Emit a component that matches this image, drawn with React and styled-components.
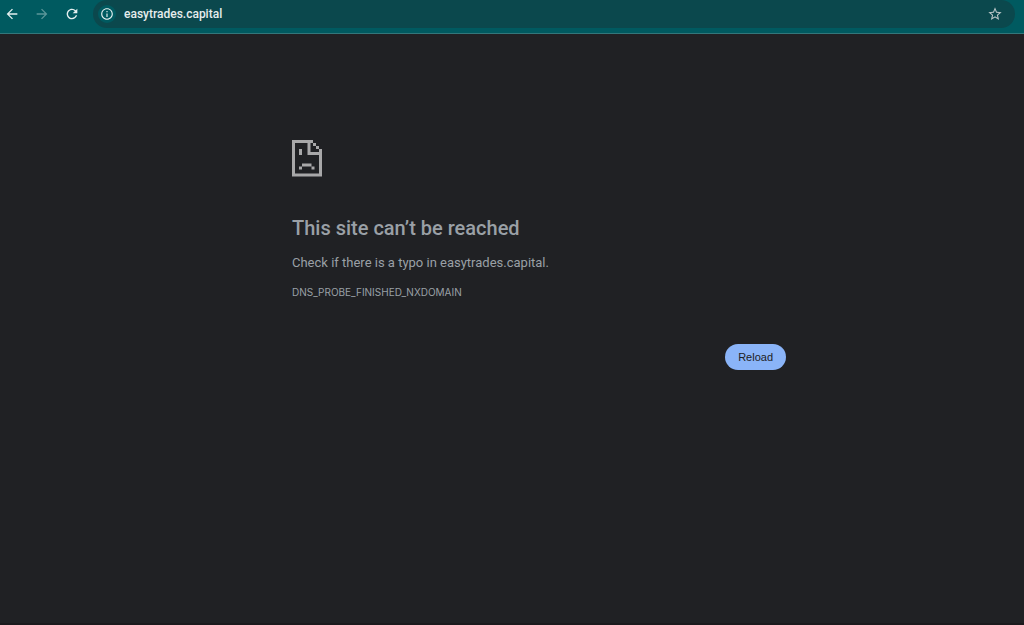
import styled, { createGlobalStyle } from "styled-components";
import { MdArrowBack, MdArrowForward, MdInfoOutline, MdRefresh, MdStarBorder } from "react-icons/md";

const GlobalStyle = createGlobalStyle`
    * {
        box-sizing: border-box;
    }

    body {
        margin: 0;
        background-color: #202124;
        font-family: Roboto, "Liberation Sans", sans-serif;
    }
`;

const Page = styled.div`
    display: flex;
    flex-direction: column;
    min-height: 100vh;
    border-bottom: 2px solid #1b1a1d;
`;

const Toolbar = styled.header`
    display: flex;
    align-items: flex-start;
    height: 34px;
    padding: 0 9px 0 3px;
    background-color: #005a60;
    border-bottom: 1px solid #33777b;
`;

const Navigation = styled.nav`
    display: flex;
    align-items: center;
    gap: 12px;
    height: 28px;
    margin-right: 12px;
`;

const IconButton = styled.button`
    display: flex;
    align-items: center;
    justify-content: center;
    flex: none;
    width: 18px;
    height: 18px;
    padding: 0;
    border: 0;
    border-radius: 50%;
    background-color: ${({ $fill }) => $fill || "transparent"};
    color: ${({ $color }) => $color || "#e4efef"};
    font-size: ${({ $size }) => $size || 16}px;
`;

const AddressBar = styled.div`
    display: flex;
    align-items: center;
    flex: 1;
    height: 28px;
    padding: 0 11px 0 5px;
    border-radius: 14px;
    background-color: #0b484d;
`;

const AddressInput = styled.input`
    flex: 1;
    min-width: 0;
    height: 20px;
    padding: 0;
    margin-left: 8px;
    border: 0;
    outline: 0;
    background: transparent;
    color: #e6eded;
    font-family: inherit;
    font-size: 12px;
    font-weight: 500;
`;

const Content = styled.main`
    width: 100%;
    padding: 106px 0 0 54px;
    color: #9aa0a6;
`;

const ErrorBox = styled.div`
    width: 100%;
    max-width: 494px;
    margin: 0 auto;
`;

const SadPageIcon = styled.svg`
    display: block;
    width: 30px;
    height: 37px;
    fill: #a8a8a9;
`;

const Title = styled.h1`
    margin: 38px 0 0;
    font-size: 20px;
    font-weight: 500;
    line-height: 26px;
`;

const Message = styled.p`
    margin: 12px 0 0;
    font-size: 13px;
    line-height: 20px;
`;

const ErrorCode = styled.div`
    margin-top: 11px;
    font-family: Inter, sans-serif;
    font-size: 10px;
    line-height: 16px;
`;

const Actions = styled.div`
    display: flex;
    justify-content: flex-end;
    margin-top: 44px;
`;

const ReloadButton = styled.button`
    height: 26px;
    padding: 0 13px;
    border: 0;
    border-radius: 13px;
    background-color: #8ab4f8;
    color: #202124;
    font-family: "Liberation Sans", sans-serif;
    font-size: 11px;
`;

const App = () => {
    return (
        <>
            <GlobalStyle />
            <Page>
                <Toolbar>
                    <Navigation>
                        <IconButton aria-label="Back">
                            <MdArrowBack />
                        </IconButton>
                        <IconButton aria-label="Forward" $color="#5b9699">
                            <MdArrowForward />
                        </IconButton>
                        <IconButton aria-label="Reload page">
                            <MdRefresh />
                        </IconButton>
                    </Navigation>
                    <AddressBar>
                        <IconButton aria-label="Site information" $fill="#005a60" $size={14}>
                            <MdInfoOutline />
                        </IconButton>
                        <AddressInput aria-label="Address" defaultValue="easytrades.capital" />
                        <IconButton aria-label="Bookmark" $color="#b9c5c6">
                            <MdStarBorder />
                        </IconButton>
                    </AddressBar>
                </Toolbar>
                <Content>
                    <ErrorBox>
                        <SadPageIcon viewBox="0 0 30 37" aria-hidden="true">
                            <path d="M0 0H21V3H24V6H27V9H30V36.500H0ZM3 3V33.500H27V15H15.500V3ZM18.500 3V12H27V9H24V6H21V3Z" fillRule="evenodd" />
                            <path d="M7 9H10V15H7ZM10 23.500H19.500V26.500H10ZM7 26.500H10V29.500H7ZM19.500 26.500H22.500V29.500H19.500Z" />
                        </SadPageIcon>
                        <Title>This site can’t be reached</Title>
                        <Message>Check if there is a typo in easytrades.capital.</Message>
                        <ErrorCode>DNS_PROBE_FINISHED_NXDOMAIN</ErrorCode>
                        <Actions>
                            <ReloadButton>Reload</ReloadButton>
                        </Actions>
                    </ErrorBox>
                </Content>
            </Page>
        </>
    );
};

export default App;
